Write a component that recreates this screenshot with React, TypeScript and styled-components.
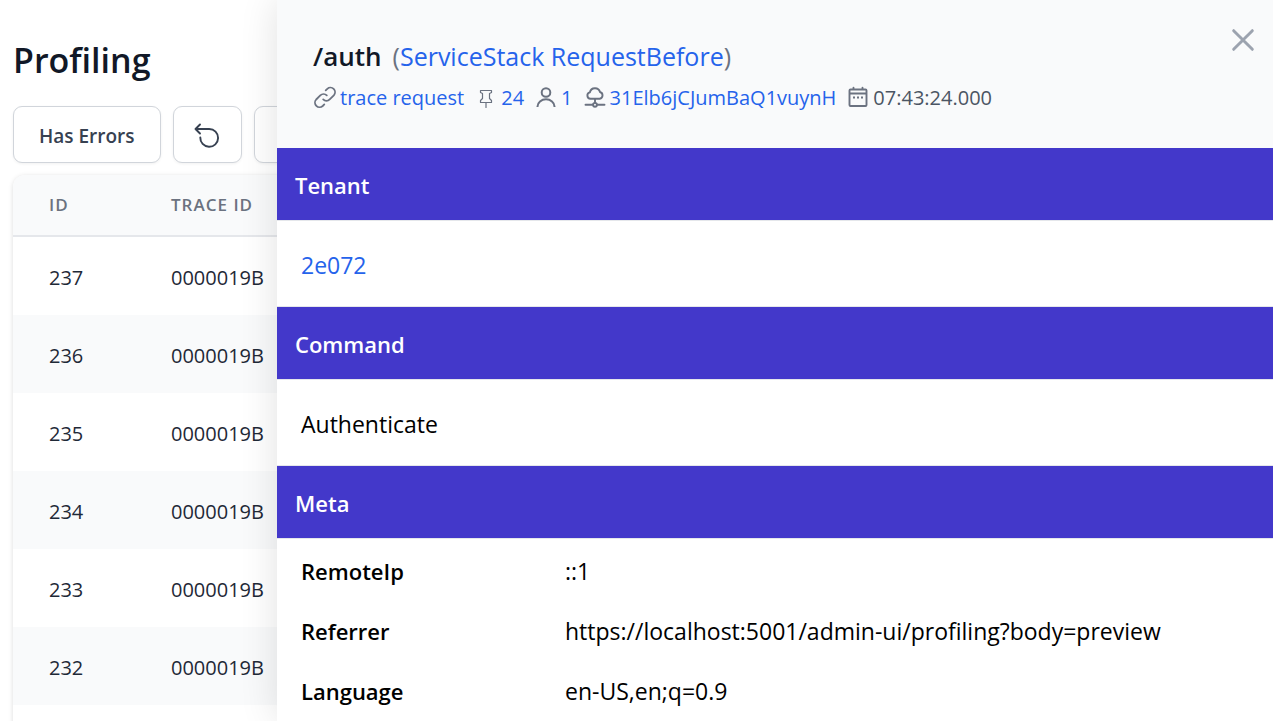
import React from "react";
import styled, { createGlobalStyle } from "styled-components";

const GlobalStyle = createGlobalStyle`
  *, *::before, *::after { box-sizing: border-box; }
  html, body { margin: 0; background: #fff; }
  body {
    font-family: "Open Sans", "Noto Sans", "Liberation Sans", sans-serif;
    font-size: 23px;
    line-height: 36px;
    color: #000;
    overflow: hidden;
  }
  a { color: #2563eb; text-decoration: none; }
`;

const Page = styled.div`
  position: relative;
  height: 100vh;
  overflow: hidden;
`;

const Main = styled.main`
  padding: 36px 13px 0;
`;

const PageTitle = styled.h1`
  margin: 0;
  font-size: 34px;
  line-height: 48px;
  font-weight: 600;
  color: #111827;
`;

const Toolbar = styled.div`
  display: flex;
  gap: 12px;
  margin: 22px 0 12px;
`;

const ToolButton = styled.button<{ $square?: boolean }>`
  display: inline-flex;
  align-items: center;
  justify-content: center;
  height: 57px;
  padding: 3px ${(p) => (p.$square ? 20 : 25)}px 0;
  border: 1px solid #d1d5db;
  border-radius: 9px;
  background: #fff;
  box-shadow: 0 1px 3px rgba(0, 0, 0, 0.06);
  color: #374151;
  font: 600 19px/30px "Open Sans", "Noto Sans", sans-serif;
  white-space: nowrap;
`;

const Grid = styled.table`
  width: 100%;
  border-collapse: separate;
  border-spacing: 0;
  border-radius: 12px 12px 0 0;
  overflow: hidden;
  box-shadow: 0 1px 5px rgba(0, 0, 0, 0.14);
`;

const HeadCell = styled.th`
  height: 62px;
  padding: 0 36px;
  border-bottom: 2px solid #e5e7eb;
  background: #f9fafb;
  color: #6b7280;
  font-size: 17px;
  line-height: 24px;
  font-weight: 600;
  letter-spacing: 1px;
  text-align: left;
  text-transform: uppercase;
  white-space: nowrap;

  &:first-child { width: 122px; }
`;

const BodyRow = styled.tr`
  background: #fff;
  &:nth-child(even) { background: #f9fafb; }
`;

const BodyCell = styled.td`
  height: 78px;
  padding: 4px 36px 0;
  color: #1f2937;
  font-size: 20px;
  line-height: 30px;
`;

const Drawer = styled.aside`
  position: absolute;
  top: 0;
  right: 0;
  bottom: 0;
  left: 277px;
  overflow: hidden;
  background: #fff;
  box-shadow: 0 0 36px rgba(0, 0, 0, 0.12);
`;

const DrawerHeader = styled.header`
  display: flex;
  justify-content: space-between;
  align-items: flex-start;
  height: 148px;
  padding: 24px 14px 0 36px;
  background: #f9fafb;
`;

const Heading = styled.h2`
  display: flex;
  gap: 11px;
  margin: 14px 0 6px;
  font-size: 26px;
  line-height: 36px;
  font-weight: 600;
  color: #111827;
  white-space: nowrap;
`;

const Operation = styled.span`
  font-size: 25px;
  font-weight: 400;
  color: #6b7280;
`;

const Facts = styled.div`
  display: flex;
  align-items: center;
  gap: 10px;
  font-size: 20px;
  line-height: 36px;
  color: #4b5563;
  white-space: nowrap;
`;

const Fact = styled.span`
  display: inline-flex;
  align-items: center;
  gap: 3px;
`;

const Icon = styled.svg<{ $size?: number }>`
  flex: none;
  width: ${(p) => p.$size ?? 24}px;
  height: ${(p) => p.$size ?? 24}px;
  fill: none;
  stroke: currentColor;
  stroke-linecap: round;
  stroke-linejoin: round;
`;

const FactIcon = styled(Icon)`
  color: #6b7280;
`;

const CloseButton = styled.button`
  display: flex;
  padding: 0;
  border: 0;
  background: none;
  color: #9ca3af;
`;

const SectionTitle = styled.h3`
  margin: 0;
  padding: 19px 18px 17px;
  background: #4338ca;
  color: #fff;
  font-size: 22px;
  line-height: 36px;
  font-weight: 600;
`;

const SectionBody = styled.div`
  padding: 26px 24px 23px;
  border: solid #e5e7eb;
  border-width: 1px 0;
`;

const MetaTable = styled.table`
  width: 100%;
  border-top: 1px solid #e5e7eb;
  border-collapse: separate;
  border-spacing: 0;
`;

const MetaName = styled.th`
  width: 264px;
  height: 60px;
  padding: 4px 0 0 24px;
  font-size: 22px;
  font-weight: 600;
  text-align: left;
`;

const MetaValue = styled.td`
  padding: 4px 24px 0;
`;

const ids = [237, 236, 235, 234, 233, 232];

const meta = [
  ["RemoteIp", "::1"],
  ["Referrer", "https://localhost:5001/admin-ui/profiling?body=preview"],
  ["Language", "en-US,en;q=0.9"],
];

export default function App() {
  return (
    <Page>
      <GlobalStyle />
      <Main>
        <PageTitle>Profiling</PageTitle>
        <Toolbar>
          <ToolButton>Has Errors</ToolButton>
          <ToolButton $square aria-label="Reset">
            <Icon $size={27} viewBox="0 0 27 27" strokeWidth="1.9">
              <path d="M1.5 6H15.2A8.9 8.9 0 1 1 6.3 14.500M6 1.5L1.5 6L6 10.5" />
            </Icon>
          </ToolButton>
          <ToolButton $square aria-label="Clear">
            <Icon $size={27} viewBox="0 0 24 24" strokeWidth="2">
              <path d="M6 6l12 12M18 6L6 18" />
            </Icon>
          </ToolButton>
        </Toolbar>
        <Grid>
          <thead>
            <tr>
              <HeadCell>Id</HeadCell>
              <HeadCell>Trace Id</HeadCell>
            </tr>
          </thead>
          <tbody>
            {ids.map((id) => (
              <BodyRow key={id}>
                <BodyCell>{id}</BodyCell>
                <BodyCell>0000019B</BodyCell>
              </BodyRow>
            ))}
            <BodyRow>
              <BodyCell colSpan={2} />
            </BodyRow>
          </tbody>
        </Grid>
      </Main>

      <Drawer>
        <DrawerHeader>
          <div>
            <Heading>
              /auth
              <Operation>
                (<a href="#operation">ServiceStack RequestBefore</a>)
              </Operation>
            </Heading>
            <Facts>
              <Fact>
                <FactIcon viewBox="0 0 24 24" strokeWidth="1.8">
                  <path d="M13.800 9.400a4.600 4.600 0 0 0-6.500 0l-4.100 4.100a4.600 4.600 0 0 0 6.500 6.500l1.600-1.600M10.200 13.400a4.600 4.600 0 0 0 6.500 0l4.100-4.100a4.600 4.600 0 0 0-6.500-6.500l-1.600 1.600" />
                </FactIcon>
                <a href="#trace">trace request</a>
              </Fact>
              <Fact>
                <FactIcon viewBox="0 0 24 24" strokeWidth="1.2">
                  <path d="M6.500 4.500H17.500V6.500L15.500 7.500V12.500L17.500 14.500V16.500H6.500V14.500L8.500 12.500V7.500L6.500 6.500ZM12 16.500V21.500" />
                </FactIcon>
                <a href="#thread">24</a>
              </Fact>
              <Fact>
                <FactIcon viewBox="0 0 24 24" strokeWidth="2">
                  <circle cx="12" cy="6.5" r="4.300" />
                  <path strokeLinecap="butt" d="M3.500 21V20.500A8.500 7.200 0 0 1 20.500 20.500V21" />
                </FactIcon>
                <a href="#user">1</a>
              </Fact>
              <Fact>
                <FactIcon viewBox="0 0 24 24" strokeWidth="1.9">
                  <path d="M7.500 12.800A3.300 3.300 0 0 1 6.900 6.300A5.200 5.200 0 0 1 17 6A3.500 3.500 0 0 1 16.700 12.800ZM12 12.800V17M2.500 18.800H10M14 18.800H21.500" />
                  <circle cx="12" cy="18.800" r="1.900" />
                </FactIcon>
                <a href="#session">31Elb6jCJumBaQ1vuynH</a>
              </Fact>
              <Fact>
                <FactIcon viewBox="0 0 24 24" strokeWidth="1.9">
                  <path d="M4.500 3.500H19.500Q20.500 3.500 20.500 4.500V19Q20.500 20 19.500 20H4.500Q3.500 20 3.500 19V4.500Q3.500 3.500 4.500 3.500ZM3.500 7.500H20.500M7.500 1.800V3.500M16.500 1.800V3.500" />
                  <path strokeLinecap="butt" strokeWidth="2" d="M7 11.500H9M11 11.500H13M15 11.500H17" />
                </FactIcon>
                07:43:24.000
              </Fact>
            </Facts>
          </div>
          <CloseButton aria-label="Close">
            <Icon $size={32} viewBox="0 0 24 24" strokeWidth="2.2">
              <path d="M5 5L19 19M19 5L5 19" />
            </Icon>
          </CloseButton>
        </DrawerHeader>

        <SectionTitle>Tenant</SectionTitle>
        <SectionBody>
          <a href="#tenant">2e072</a>
        </SectionBody>
        <SectionTitle>Command</SectionTitle>
        <SectionBody>Authenticate</SectionBody>
        <SectionTitle>Meta</SectionTitle>
        <MetaTable>
          <tbody>
            {meta.map(([name, value]) => (
              <tr key={name}>
                <MetaName scope="row">{name}</MetaName>
                <MetaValue>{value}</MetaValue>
              </tr>
            ))}
          </tbody>
        </MetaTable>
      </Drawer>
    </Page>
  );
}
